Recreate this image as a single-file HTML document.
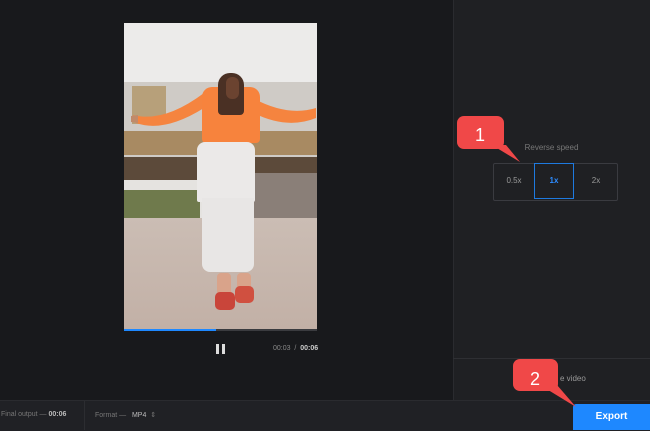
<!DOCTYPE html>
<html><head><style>
body{margin:0;width:650px;height:430px;background:#18191c;font-family:"Liberation Sans",sans-serif;position:relative;overflow:hidden}
.abs{position:absolute}
</style></head><body>
<div class="abs" style="left:453px;top:0;width:197px;height:400px;background:#1f2023;border-left:1px solid #2a2b2f"></div>
<div class="abs" style="left:453px;top:358px;width:197px;height:1px;background:#2e2f33"></div>
<div class="abs" style="left:0;top:400px;width:650px;height:30px;background:#202125;border-top:1px solid #2a2b2f"></div>
<!-- video -->
<div class="abs" style="left:124px;top:23px;width:193px;height:307px;overflow:hidden;background:#ecebea">
 <div class="abs" style="left:0;top:59px;width:193px;height:80px;background:#cfcbc6"></div>
 <div class="abs" style="left:8px;top:63px;width:34px;height:38px;background:#b7a07a"></div>
 <div class="abs" style="left:0;top:108px;width:193px;height:24px;background:#a88a62"></div>
 <div class="abs" style="left:0;top:134px;width:193px;height:23px;background:#5c4a3a"></div>
 <div class="abs" style="left:0;top:157px;width:193px;height:38px;background:#e5e3e0"></div>
 <div class="abs" style="left:0;top:167px;width:76px;height:28px;background:#6f7a4c"></div>
 <div class="abs" style="left:130px;top:150px;width:63px;height:45px;background:#8a7f78"></div>
 <div class="abs" style="left:0;top:195px;width:193px;height:112px;background:linear-gradient(#cbbdb4,#c2b0a6)"></div>
 <svg class="abs" style="left:0;top:0" width="193" height="307">
  <path d="M9 92 Q40 100 80 70 L80 85 Q40 110 12 100Z" fill="#f5843f"/>
  <path d="M120 70 Q160 95 192 85 L192 95 Q160 108 122 86Z" fill="#f5843f"/>
  <path d="M7 93 L14 92 L14 100 L7 99Z" fill="#c08a6a"/>
 </svg>
 <div class="abs" style="left:78px;top:64px;width:58px;height:56px;background:#f7833d;border-radius:10px 10px 4px 4px"></div>
 <div class="abs" style="left:94px;top:50px;width:26px;height:42px;background:#4a3024;border-radius:12px 12px 4px 4px"></div>
 <div class="abs" style="left:102px;top:54px;width:13px;height:22px;background:#6b4330;border-radius:6px"></div>
 <div class="abs" style="left:73px;top:119px;width:58px;height:60px;background:#ebe9e8;border-radius:8px 8px 2px 2px"></div>
 <div class="abs" style="left:78px;top:175px;width:52px;height:74px;background:#e8e6e5;border-radius:0 0 8px 8px"></div>
 <div class="abs" style="left:93px;top:250px;width:14px;height:36px;background:#d9a38a;border-radius:4px"></div>
 <div class="abs" style="left:113px;top:250px;width:14px;height:30px;background:#d9a38a;border-radius:4px"></div>
 <div class="abs" style="left:91px;top:269px;width:20px;height:18px;background:#c9453a;border-radius:5px"></div>
 <div class="abs" style="left:111px;top:263px;width:19px;height:17px;background:#d05040;border-radius:5px"></div>
</div>
<div class="abs" style="left:124px;top:329px;width:193px;height:2px;background:#3a3b3f"></div>
<div class="abs" style="left:124px;top:329px;width:92px;height:2px;background:#1e88ff"></div>
<div class="abs" style="left:216px;top:344px;width:3px;height:10px;background:#ddd"></div>
<div class="abs" style="left:222px;top:344px;width:3px;height:10px;background:#ddd"></div>
<div class="abs" style="left:273px;top:345px;font-size:7px;color:#888">00:03 &nbsp;/&nbsp; <span style="color:#ccc;font-weight:bold">00:06</span></div>
<!-- right panel -->
<div class="abs" style="left:453px;top:143px;width:197px;text-align:center;font-size:8px;color:#777">Reverse speed</div>
<div class="abs" style="left:493px;top:163px;width:123px;height:36px;border:1px solid #3a3b40;border-radius:2px"></div>
<div class="abs" style="left:534px;top:163px;width:40px;height:36px;border:1px solid #1e7ae0;box-sizing:border-box"></div>
<div class="abs" style="left:494px;top:176px;width:40px;text-align:center;font-size:8px;color:#999">0.5x</div>
<div class="abs" style="left:534px;top:176px;width:40px;text-align:center;font-size:8px;color:#2d8cff;font-weight:bold">1x</div>
<div class="abs" style="left:576px;top:176px;width:40px;text-align:center;font-size:8px;color:#999">2x</div>
<div class="abs" style="left:560px;top:374px;font-size:8px;color:#999">e video</div>
<!-- bottom -->
<div class="abs" style="left:1px;top:411px;font-size:7px;color:#777">Final output — <span style="color:#bbb;font-weight:bold">00:06</span></div>
<div class="abs" style="left:84px;top:401px;width:1px;height:29px;background:#2c2d31"></div>
<div class="abs" style="left:95px;top:411px;font-size:7px;color:#777">Format — &nbsp;&nbsp;<span style="color:#bbb">MP4</span> &nbsp;⇕</div>
<div class="abs" style="left:573px;top:404px;width:77px;height:26px;background:#1e88ff;border-radius:3px 0 0 0;color:#fff;font-size:10px;font-weight:bold;text-align:center;line-height:26px">Export</div>
<!-- callouts -->
<svg class="abs" style="left:0;top:0" width="650" height="430">
<path d="M492 145 L520 162 L506 145Z" fill="#f04848"/>
<rect x="457" y="116" width="47" height="33" rx="7" fill="#f04848"/>
<path d="M540 385 L576 407 L557 385Z" fill="#f04848"/>
<rect x="513" y="359" width="45" height="32" rx="7" fill="#f04848"/>
<text x="480" y="141" fill="#fff" font-size="18" font-family="Liberation Sans" text-anchor="middle">1</text>
<text x="535" y="385" fill="#fff" font-size="18" font-family="Liberation Sans" text-anchor="middle">2</text>
</svg>
</body></html>
